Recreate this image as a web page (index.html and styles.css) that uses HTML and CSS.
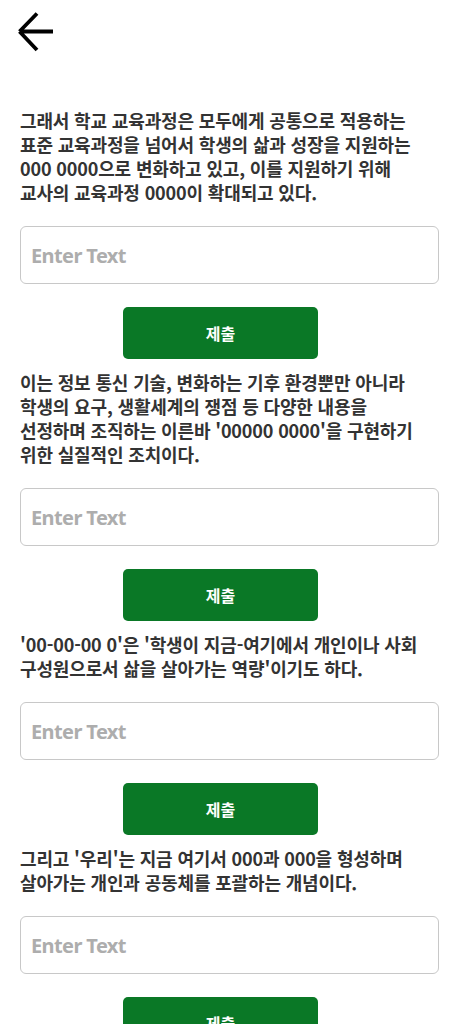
FILE: index.html
```html
<!DOCTYPE html>
<html lang="ko">
<head>
<meta charset="utf-8">
<link rel="stylesheet" href="styles.css">
</head>
<body>
<div class="page">
  <header class="topbar">
    <svg class="back" width="40" height="42" viewBox="0 0 40 42" aria-hidden="true">
      <path d="M3.5 20.5H37M3.5 20.5L21 2.5M3.5 20.5L21 39" fill="none" stroke="#000" stroke-width="3.8" stroke-linecap="butt"/>
    </svg>
  </header>

  <section class="block first">
    <p class="q">그래서 학교 교육과정은 모두에게 공통으로 적용하는<br>표준 교육과정을 넘어서 학생의 삶과 성장을 지원하는<br>000 0000으로 변화하고 있고, 이를 지원하기 위해<br>교사의 교육과정 0000이 확대되고 있다.</p>
    <div class="field">Enter Text</div>
    <div class="btnrow"><button class="submit">제출</button></div>
  </section>

  <section class="block">
    <p class="q">이는 정보 통신 기술, 변화하는 기후 환경뿐만 아니라<br>학생의 요구, 생활세계의 쟁점 등 다양한 내용을<br>선정하며 조직하는 이른바 '00000 0000'을 구현하기<br>위한 실질적인 조치이다.</p>
    <div class="field">Enter Text</div>
    <div class="btnrow"><button class="submit">제출</button></div>
  </section>

  <section class="block">
    <p class="q">'00-00-00 0'은 '학생이 지금-여기에서 개인이나 사회<br>구성원으로서 삶을 살아가는 역량'이기도 하다.</p>
    <div class="field">Enter Text</div>
    <div class="btnrow"><button class="submit">제출</button></div>
  </section>

  <section class="block">
    <p class="q">그리고 '우리'는 지금 여기서 000과 000을 형성하며<br>살아가는 개인과 공동체를 포괄하는 개념이다.</p>
    <div class="field">Enter Text</div>
    <div class="btnrow"><button class="submit">제출</button></div>
  </section>
</div>
</body>
</html>
```

FILE: styles.css
```css
* { box-sizing: border-box; }
html, body { margin: 0; padding: 0; background: #fff; }
body {
  font-family: "Noto Sans CJK KR", "Noto Sans", sans-serif;
  color: #333;
}
.page {
  padding: 0 32px 0 20px;
}
.topbar {
  height: 56px;
  padding-top: 11px;
  margin-left: -6px;
}
.back { display: block; margin-left: 2px; }
.block.first { margin-top: 52px; }
.q {
  margin: 0;
  font-size: 18px;
  line-height: 24px;
  font-weight: 700;
  letter-spacing: -0.15px;
  color: #333;
  white-space: nowrap;
}
.field {
  margin-top: 22px;
  height: 58px;
  border: 1.5px solid #c8c8c8;
  border-radius: 6px;
  padding-left: 10px;
  display: flex;
  align-items: center;
  font-family: "Noto Sans", sans-serif;
  font-size: 20px;
  font-weight: 700;
  color: #adadad;
  letter-spacing: -0.6px;
}
.btnrow {
  display: flex;
  margin-top: 23px;
  padding-left: 103px;
}
.submit {
  width: 195px;
  height: 52px;
  border: 0;
  border-radius: 5px;
  background: #0a7826;
  color: #fff;
  font-family: "Noto Sans CJK KR", sans-serif;
  font-size: 16px;
  font-weight: 700;
  padding: 0;
  margin-bottom: 11px;
}
```
